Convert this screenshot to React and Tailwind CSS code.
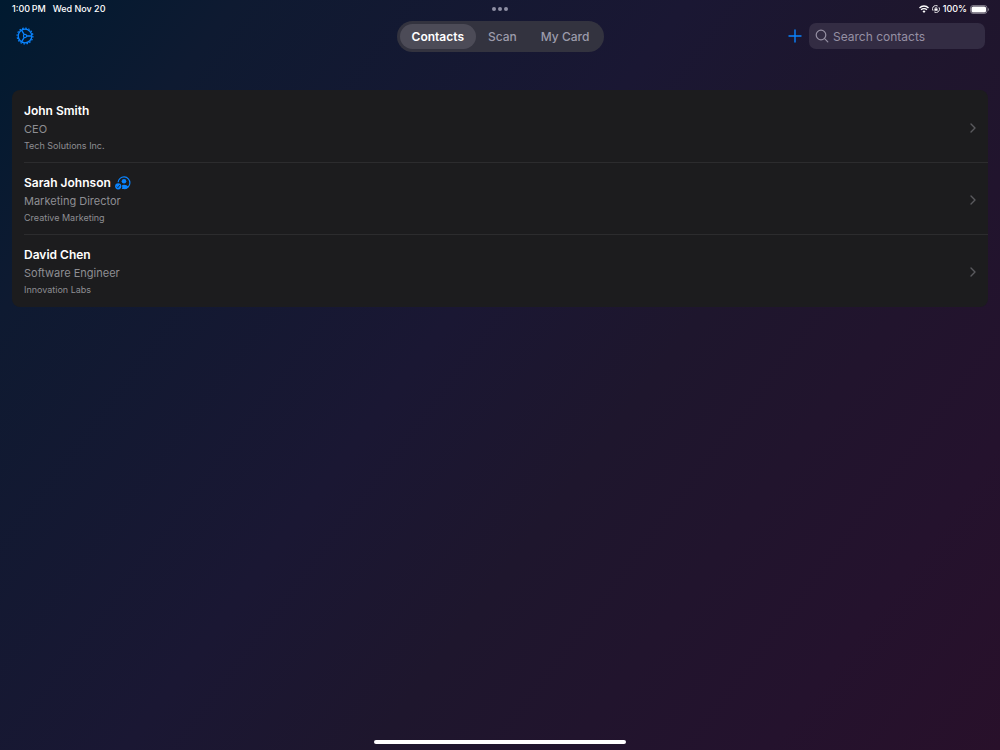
import React, { useState } from 'react';

const TABS = ['Contacts', 'Scan', 'My Card'];

const CONTACTS = [
    { id: 1, name: 'John Smith', title: 'CEO', company: 'Tech Solutions Inc.', verified: false },
    { id: 2, name: 'Sarah Johnson', title: 'Marketing Director', company: 'Creative Marketing', verified: true },
    { id: 3, name: 'David Chen', title: 'Software Engineer', company: 'Innovation Labs', verified: false },
];

function GearIcon() {
    return (
        <svg viewBox="0 0 18 18" className="size-[18px]" fill="none" stroke="currentColor">
            <circle cx="9" cy="9" r="7.9" strokeWidth="1.2" strokeDasharray="1.6 1.502" />
            <circle cx="9" cy="9" r="6.8" strokeWidth="1.3" />
            <circle cx="9" cy="9" r="1.6" strokeWidth="1.1" />
            <path d="M10.6 9h5M8.2 7.6 5.6 3.2M8.2 10.4l-2.6 4.4" strokeWidth="1.3" />
        </svg>
    );
}

function PlusIcon() {
    return (
        <svg viewBox="0 0 14 14" className="size-[14px]" fill="none" stroke="currentColor" strokeWidth="1.4" strokeLinecap="round">
            <path d="M7 1v12M1 7h12" />
        </svg>
    );
}

function SearchIcon() {
    return (
        <svg viewBox="0 0 14 14" className="size-[14px] shrink-0" fill="none" stroke="currentColor" strokeWidth="1.2" strokeLinecap="round">
            <circle cx="6" cy="6" r="4.8" />
            <path d="m9.6 9.6 3.2 3.2" />
        </svg>
    );
}

function VerifiedIcon() {
    return (
        <svg viewBox="0 0 16 14" className="h-[14px] w-4 text-[#0a84ff]" fill="none" role="img" aria-label="Verified">
            <path d="M3.1 6.3A5.9 5.9 0 1 1 9 12.7" stroke="currentColor" strokeWidth="1.2" />
            <circle cx="9" cy="5.2" r="2.3" fill="currentColor" />
            <path d="M6.7 13c.8-1.2.8-2.4.1-3.600.6-.5 1.300-.7 2.200-.7 1.900 0 3.400.8 4.200 2A6 6 0 0 1 9 13z" fill="currentColor" />
            <circle cx="3.2" cy="10.3" r="3.1" fill="currentColor" />
            <path d="m1.8 10.5 1.1 1.2 1.9-2.7" stroke="#1c1c1e" strokeWidth=".8" />
        </svg>
    );
}

function ChevronIcon() {
    return (
        <svg viewBox="0 0 6 10" className="h-[10px] w-[6px] text-[#5a5a5e]" fill="none" stroke="currentColor" strokeWidth="1.4" strokeLinecap="round" strokeLinejoin="round">
            <path d="m1 1 4 4-4 4" />
        </svg>
    );
}

function StatusBar() {
    return (
        <div className="grid h-[18px] grid-cols-3 items-center pr-[11px] pl-3 text-[9px] font-medium">
            <div className="flex gap-[7px]">
                <span>1:00{'\u2009'}PM</span>
                <span>Wed Nov 20</span>
            </div>
            <div className="flex justify-center gap-[2px]">
                <span className="size-1 rounded-full bg-[#8e8fa3]" />
                <span className="size-1 rounded-full bg-[#8e8fa3]" />
                <span className="size-1 rounded-full bg-[#8e8fa3]" />
            </div>
            <div className="flex items-center justify-end gap-[3px]">
                <svg viewBox="0 0 10 8" className="h-2 w-[10px]" fill="none" stroke="currentColor" strokeWidth="1.4">
                    <path d="M.5 2.9a6.4 6.4 0 0 1 9 0" />
                    <path d="M2.1 4.8a4.1 4.1 0 0 1 5.800 0" />
                    <path d="M5 7.9 3.5 6.300a2.100 2.100 0 0 1 3 0z" fill="currentColor" stroke="none" />
                </svg>
                <svg viewBox="0 0 8 8" className="size-2" fill="none" stroke="currentColor" strokeWidth=".9">
                    <path d="M1 5.7A3.4 3.4 0 0 1 5.7 1M7 2.3A3.4 3.4 0 0 1 2.3 7" />
                    <rect x="2.400" y="3.5" width="3.2" height="2.3" rx=".4" fill="currentColor" stroke="none" />
                    <path d="M3.2 3.8V3a.8.8 0 0 1 1.6 0v.8" strokeWidth=".6" />
                </svg>
                <span>100%</span>
                <svg viewBox="0 0 19 9" className="h-[9px] w-[19px]">
                    <rect x=".5" y=".5" width="16.5" height="8" rx="2.5" fill="none" stroke="#ffffff" strokeOpacity=".4" />
                    <rect x="1.5" y="1.5" width="14.5" height="6" rx="1.6" fill="#ffffff" />
                    <path d="M18 3v3c.6-.3.9-.8.9-1.5S18.6 3.3 18 3" fill="#ffffff" fillOpacity=".45" />
                </svg>
            </div>
        </div>
    );
}

function ContactRow({ contact }) {
    return (
        <li className="group pl-3">
            <a href={`#contact-${contact.id}`} className="flex items-center justify-between border-b border-[#2c2c2e] pt-3 pr-3 pb-[10px] group-last:border-transparent">
                <div>
                    <h2 className="flex items-center gap-1 text-[12px] leading-4 font-semibold text-white">
                        {contact.name}
                        {contact.verified && <VerifiedIcon />}
                    </h2>
                    <p className="mt-[3px] text-[11px] leading-[14px] text-[#8e8e93]">{contact.title}</p>
                    <p className="mt-1 text-[9px] leading-3 text-[#8e8e93]">{contact.company}</p>
                </div>
                <ChevronIcon />
            </a>
        </li>
    );
}

export default function App() {
    const [activeTab, setActiveTab] = useState('Contacts');
    const [query, setQuery] = useState('');

    const visible = CONTACTS.filter((c) => c.name.toLowerCase().includes(query.toLowerCase()));

    return (
        <div className="flex min-h-screen flex-col bg-[linear-gradient(127deg,#001a30_0%,#0e1a31_15%,#1a1733_44%,#1e162d_60%,#24122d_85%,#28102a_100%)] font-['Inter',sans-serif] text-white">
            <StatusBar />

            <header className="grid h-9 grid-cols-[1fr_auto_1fr] items-center pr-[15px] pl-4">
                <button type="button" aria-label="Settings" className="justify-self-start text-[#0a84ff]">
                    <GearIcon />
                </button>

                <nav className="flex rounded-full bg-[#33333f] p-[3px] text-[12px] leading-4 font-medium">
                    {TABS.map((tab) => (
                        <button
                            key={tab}
                            type="button"
                            onClick={() => setActiveTab(tab)}
                            className={`h-[25px] rounded-full px-3 pt-px ${activeTab === tab ? 'bg-[#4c4b57] font-semibold text-white' : 'text-[#9c9bab]'}`}
                        >
                            {tab}
                        </button>
                    ))}
                </nav>

                <div className="flex items-center justify-end gap-[7px]">
                    <button type="button" aria-label="Add contact" className="text-[#0a84ff]">
                        <PlusIcon />
                    </button>
                    <label className="flex h-[26px] w-44 items-center gap-1 rounded-[7px] bg-[#332c43] px-[6px] text-[#9690a3]">
                        <SearchIcon />
                        <input
                            type="text"
                            aria-label="Search contacts"
                            placeholder="Search contacts"
                            value={query}
                            onChange={(e) => setQuery(e.target.value)}
                            className="w-full min-w-0 bg-transparent pt-px text-[12px] leading-4 text-white outline-none placeholder:text-[#9690a3]"
                        />
                    </label>
                </div>
            </header>

            <main className="flex-1 px-3 pt-9">
                <ul className="overflow-hidden rounded-lg bg-[#1c1c1e] pt-px">
                    {visible.map((contact) => (
                        <ContactRow key={contact.id} contact={contact} />
                    ))}
                </ul>
            </main>

            {/* Home indicator */}
            <div className="mx-auto mb-[6px] h-1 w-[252px] rounded-full bg-white" />
        </div>
    );
}
